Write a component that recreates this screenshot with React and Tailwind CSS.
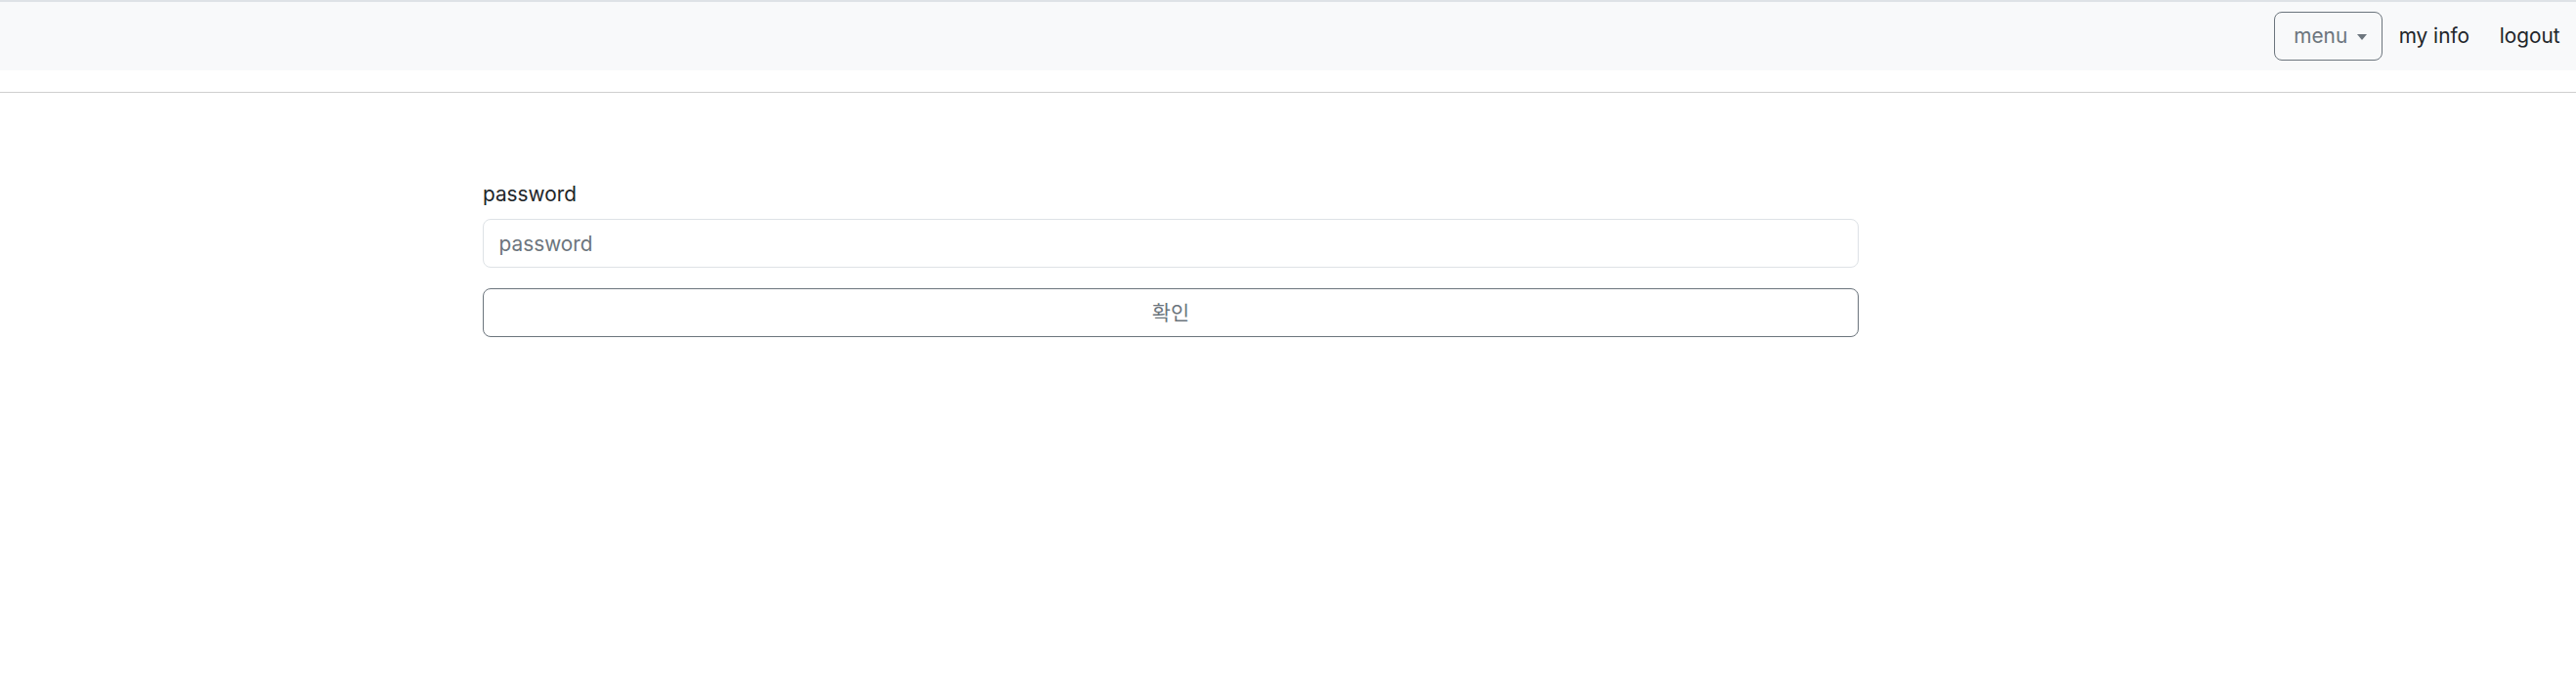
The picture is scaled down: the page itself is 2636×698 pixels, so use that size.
import React, { useState } from 'react';

export default function App() {
  const [pw, setPw] = useState('');

  return (
    <div className="min-h-screen bg-white text-[20.8px] leading-[1.5] text-[#212529] font-['Inter','Noto_Sans_CJK_KR',sans-serif]">
      {/* Top navigation bar */}
      <nav className="border-t-2 border-[#dee2e6] bg-[#f8f9fa] h-[72px] flex items-center justify-end pr-[6px]">
        <button className="h-[50px] w-[111px] flex items-center justify-center gap-[10px] border border-[#6c757d] rounded-[8px] text-[#6c757d] pl-[4px]">
          <span>menu</span>
          <span className="w-0 h-0 border-x-[5px] border-x-transparent border-t-[6px] border-t-[#6c757d] mt-[1px]" />
        </button>
        <a className="px-[10.4px] ml-[6px] py-[10px] cursor-pointer">my info</a>
        <a className="px-[10.4px] ml-[10px] py-[10px] cursor-pointer">logout</a>
      </nav>

      <hr className="mt-[22px] border-0 border-t border-[#cfcfcf]" />

      {/* Password confirm form */}
      <div className="mt-[88px] ml-[494px] w-[1408px]">
        <label className="block mb-[10.4px] h-[31px]">password</label>
        <input
          type="password"
          value={pw}
          onChange={(e) => setPw(e.target.value)}
          placeholder="password"
          className="block w-full h-[50px] px-[15.6px] border border-[#dee2e6] rounded-[8px] bg-white placeholder-[#6c757d] outline-none"
        />
        <button className="mt-[21px] block w-full h-[50px] border border-[#6c757d] rounded-[8px] text-[#6c757d]">
          확인
        </button>
      </div>
    </div>
  );
}
